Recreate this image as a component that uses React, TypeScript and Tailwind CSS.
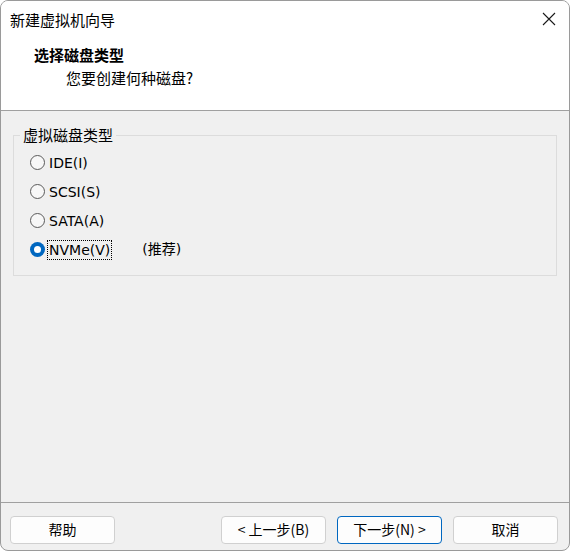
import React from 'react'

const font = { fontFamily: '"Segoe UI", "Noto Sans CJK SC", "Noto Sans", sans-serif' }
const latin = { fontFamily: '"DejaVu Sans", "Noto Sans CJK SC", sans-serif' }

function Radio({ checked }: { checked?: boolean }) {
  if (checked) {
    return (
      <span className="w-[15px] h-[15px] rounded-full bg-[#0067c0] flex items-center justify-center shrink-0">
        <span className="w-[7px] h-[7px] rounded-full bg-white" />
      </span>
    )
  }
  return <span className="w-[15px] h-[15px] rounded-full border border-[#5a5a5a] bg-[#f7f7f7] shrink-0" />
}

function Btn({ label, primary }: { label: string; primary?: boolean }) {
  return (
    <button
      className={
        'w-[105px] h-[28px] rounded-[4px] bg-[#fdfdfd] text-[14px] text-black flex items-center justify-center border ' +
        (primary ? 'border-[#0067c0]' : 'border-[#d0d0d0]')
      }
    >
      {label}
    </button>
  )
}

export default function App() {
  const options = [
    { label: 'IDE(I)' },
    { label: 'SCSI(S)' },
    { label: 'SATA(A)' },
    { label: 'NVMe(V)', checked: true },
  ]

  return (
    <div className="w-[570px] h-[551px] bg-white" style={font}>
      <div className="w-full h-full rounded-[8px] border border-[#9a9a9a] overflow-hidden flex flex-col bg-[#f0f0f0]">
        {/* Header */}
        <div className="h-[110px] bg-white border-b border-[#a0a0a0] shrink-0 flex flex-col">
          <div className="h-[38px] flex items-center justify-between pl-[9px] pr-[13px]">
            <span className="text-[15px] text-black">新建虚拟机向导</span>
            <svg width="14" height="14" viewBox="0 0 14 14" className="mt-[-2px]">
              <path d="M1 1 L13 13 M13 1 L1 13" stroke="#1a1a1a" strokeWidth="1.1" />
            </svg>
          </div>
          <div className="pl-[33px] mt-[6px] text-[15px] font-bold text-black leading-[20px]">选择磁盘类型</div>
          <div className="pl-[65px] mt-[3px] text-[15px] text-black leading-[20px]">您要创建何种磁盘?</div>
        </div>

        {/* Body */}
        <div className="flex-1 px-[12px] pt-[14px]">
          <fieldset className="border border-[#dcdcdc] h-[151px] p-0">
            <legend className="ml-[6px] px-[3px] text-[15px] text-black leading-[20px]">虚拟磁盘类型</legend>
            <div className="flex flex-col px-[16px] pt-[3px]">
              {options.map((o) => (
                <div key={o.label} className="h-[29px] flex items-center gap-[3px]">
                  <Radio checked={o.checked} />
                  <span
                    style={latin}
                    className={
                      'text-[14px] text-black leading-[18px] px-[1px] ' +
                      (o.checked ? 'outline outline-1 outline-dotted outline-black' : '')
                    }
                  >
                    {o.label}
                  </span>
                  {o.checked && (
                    <span style={latin} className="ml-[28px] text-[14px] text-black">
                      (推荐)
                    </span>
                  )}
                </div>
              ))}
            </div>
          </fieldset>
        </div>

        {/* Footer */}
        <div className="h-[48px] border-t border-[#a0a0a0] shrink-0 flex items-center pl-[9px] pr-[11px] pt-[6px]">
          <Btn label="帮助" />
          <div className="flex-1" />
          <div className="flex gap-[11px]">
            <Btn label="< 上一步(B)" />
            <Btn label="下一步(N) >" primary />
            <Btn label="取消" />
          </div>
        </div>
      </div>
    </div>
  )
}
